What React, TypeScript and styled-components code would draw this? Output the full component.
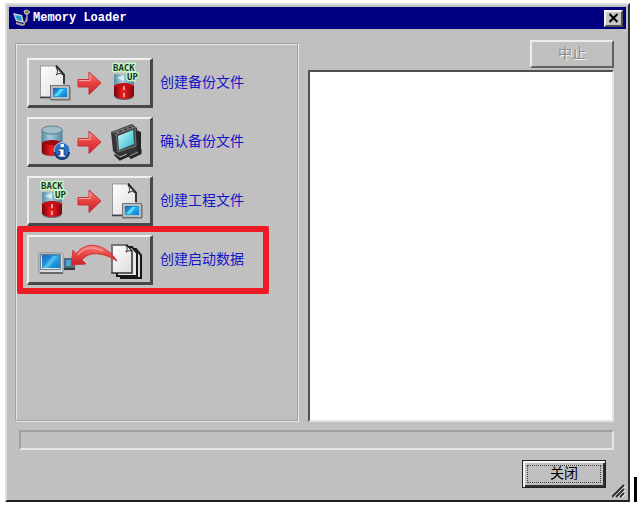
import React from "react";
import styled, { createGlobalStyle } from "styled-components";

const GlobalStyle = createGlobalStyle`
  *, *::before, *::after { box-sizing: border-box; }
  body {
    margin: 0;
    background: #fff;
    font-family: "Liberation Sans", "Noto Sans CJK SC", sans-serif;
    font-size: 14px;
  }
  button { font: inherit; }
`;

const Page = styled.div`
  display: flex;
  gap: 4px;
  min-height: 100vh;
  padding: 3px 0 3px 5px;
`;

const Dialog = styled.main`
  flex: 1;
  min-width: 0;
  display: flex;
  flex-direction: column;
  padding: 2px;
  background: #c0c0c0;
  border: 2px solid;
  border-color: #dedede #303030 #202020 #dedede;
`;

const TitleBar = styled.header`
  display: flex;
  align-items: center;
  gap: 2px;
  height: 22px;
  padding: 0 3px 0 4px;
  background: #000080;
`;

const Title = styled.h1`
  flex: 1;
  margin: 0;
  color: #fff;
  font: bold 12px/16px "Liberation Mono", monospace;
`;

const TitleButton = styled.button`
  display: grid;
  place-items: center;
  width: 19px;
  height: 17px;
  padding: 0;
  background: #c8c8c8;
  border: 2px solid;
  border-color: #f4f4f4 #505050 #505050 #f4f4f4;
`;

const Columns = styled.div`
  flex: 1;
  display: flex;
  gap: 10px;
  padding: 11px 12px 0 6px;
`;

const Actions = styled.section`
  flex: 0 0 283px;
  display: flex;
  flex-direction: column;
  gap: 9px;
  margin: 3px 0 1px;
  padding: 14px 0 0 11px;
  border: 1px solid #a0a0a0;
  box-shadow: 1px 1px #e8e8e8, inset 1px 1px #e8e8e8;
`;

const ActionRow = styled.div`
  position: relative;
  display: flex;
  align-items: center;
  gap: 7px;
`;

const ActionButton = styled.button`
  display: flex;
  align-items: center;
  justify-content: center;
  gap: 8px;
  width: 126px;
  height: 50px;
  padding: 0;
  background: #c0c0c0;
  border: solid;
  border-width: 2px 3px 3px 2px;
  border-color: #f0f0f0 #484848 #484848 #f0f0f0;
  svg { flex: none; overflow: visible; }
`;

const ActionLabel = styled.label`
  color: #1414c8;
  line-height: 20px;
  padding-bottom: 2px;
`;

const Highlight = styled.span`
  position: absolute;
  inset: -9px 28px -9px -10px;
  border: 6px solid #ee1c24;
  border-radius: 2px;
  pointer-events: none;
`;

const Output = styled.section`
  flex: 1;
  min-width: 0;
  display: flex;
  flex-direction: column;
  gap: 2px;
`;

const AbortButton = styled.button`
  align-self: flex-end;
  width: 84px;
  height: 28px;
  padding: 0 0 2px;
  line-height: 20px;
  background: #c0c0c0;
  border: 2px solid;
  border-color: #ececec #606060 #606060 #ececec;
  &:disabled { color: #8c8c8c; text-shadow: 1px 1px #f4f4f4; }
`;

const LogArea = styled.textarea`
  flex: 1;
  width: 100%;
  min-height: 200px;
  resize: none;
  outline: none;
  background: #fff;
  border: 2px solid;
  border-color: #505050 #e4e4e4 #e4e4e4 #505050;
`;

const StatusBar = styled.div`
  height: 20px;
  margin: 8px 12px 0 10px;
  border: 2px solid;
  border-color: #a0a0a0 #e6e6e6 #e6e6e6 #a0a0a0;
`;

const Footer = styled.footer`
  display: flex;
  justify-content: flex-end;
  align-items: flex-end;
  gap: 6px;
  padding-top: 10px;
`;

const CloseButton = styled.button`
  width: 84px;
  height: 28px;
  margin-bottom: 10px;
  padding: 0 0 2px;
  line-height: 18px;
  color: #000;
  background: #c0c0c0;
  border: 1px solid #202020;
  box-shadow: inset 2px 2px #f4f4f4, inset -2px -2px #303030;
  outline: 1px dotted #404040;
  outline-offset: -6px;
`;

const Caret = styled.div`
  align-self: flex-end;
  width: 3px;
  height: 25px;
  background: #000;
`;

function Gradients() {
  return (
    <svg width="0" height="0" display="block" aria-hidden="true">
      <defs>
        <linearGradient id="paper" x1="0" y1="0" x2="1" y2="1">
          <stop offset="0" stopColor="#fff" />
          <stop offset="1" stopColor="#dcdcdc" />
        </linearGradient>
        <linearGradient id="screen" x1="0" y1="0" x2="1" y2="1">
          <stop offset="0" stopColor="#1464b4" />
          <stop offset="0.55" stopColor="#24a4e8" />
          <stop offset="1" stopColor="#0c78c8" />
        </linearGradient>
        <linearGradient id="cyan" x1="0" y1="0" x2="1" y2="1">
          <stop offset="0" stopColor="#d0fafa" />
          <stop offset="1" stopColor="#20b8d0" />
        </linearGradient>
        <linearGradient id="red" x1="0" y1="0" x2="0" y2="1">
          <stop offset="0" stopColor="#f48078" />
          <stop offset="0.5" stopColor="#e84040" />
          <stop offset="1" stopColor="#c82028" />
        </linearGradient>
        <linearGradient id="liquid" x1="0" y1="0" x2="1" y2="0">
          <stop offset="0" stopColor="#780008" />
          <stop offset="0.45" stopColor="#f02020" />
          <stop offset="1" stopColor="#800008" />
        </linearGradient>
        <linearGradient id="glass" x1="0" y1="0" x2="1" y2="0">
          <stop offset="0" stopColor="#5890a4" />
          <stop offset="0.4" stopColor="#a8ccd8" />
          <stop offset="1" stopColor="#5888a0" />
        </linearGradient>
      </defs>
    </svg>
  );
}

function FileIcon() {
  return (
    <svg width="32" height="38" viewBox="0 0 32 38" aria-hidden="true">
      <path d="M2.500 2H19l7 8v23H2.500z" fill="url(#paper)" stroke="#888" strokeWidth=".8" />
      <path d="M2 33.500h12" stroke="#404040" strokeWidth="1.500" />
      <path d="M18 1.500l8 9V20" fill="none" stroke="#202020" strokeWidth="1.700" />
      <path d="M18 3c2 3 2 6 0 8 3-2 5-2 7 0z" fill="#eee" stroke="#303030" />
      <rect x="12.500" y="21.500" width="19" height="14" fill="#b8bcc0" stroke="#70777c" />
      <rect x="15" y="24" width="14" height="9" fill="url(#screen)" />
      <path d="M16 32l6-7h4l-6 7z" fill="#54dcfc" />
      <path d="M13 36h19V23" fill="none" stroke="#686e70" />
    </svg>
  );
}

function ArrowIcon() {
  return (
    <svg width="24" height="24" viewBox="0 0 24 24" aria-hidden="true">
      <path d="M0 8.500h11V1l12 11-12 11.500V16H0z" fill="url(#red)" stroke="#c83038" />
      <path d="M1 9.500h11v-6" fill="none" stroke="#f8a8a0" />
    </svg>
  );
}

function BackupIcon() {
  return (
    <svg width="32" height="38" viewBox="0 0 32 38" aria-hidden="true">
      <path d="M4 10v21c0 6 20 6 20 0V10z" fill="url(#glass)" />
      <path d="M4 22v9c0 6 20 6 20 0v-9c-3-3-17-3-20 0z" fill="url(#liquid)" />
      <path d="M4 22c3-4 17-4 20 0-4 3-16 3-20 0z" fill="#c01018" />
      <path d="M14 22v4M14 29v4" stroke="#ff9090" strokeWidth="2" />
      <path d="M4 31c0 6 20 6 20 0" fill="none" stroke="#586c80" />
      <path d="M7 14l7-3v6z" fill="#d0eef4" />
      <g
        fontFamily="DejaVu Sans Mono, monospace"
        fontWeight="bold"
        fontSize="9"
        fill="#183820"
        stroke="#c8f4c8"
        strokeWidth="3"
        strokeLinejoin="round"
        paintOrder="stroke"
      >
        <text x="3" y="7">BACK</text>
        <text x="17" y="16">UP</text>
      </g>
    </svg>
  );
}

function InfoTankIcon() {
  return (
    <svg width="32" height="38" viewBox="0 0 32 38" aria-hidden="true">
      <path d="M4 7v22c0 5 20 5 20 0V7z" fill="url(#glass)" stroke="#54849a" />
      <path d="M4 20v9c0 5 20 5 20 0v-9c-3-3-17-3-20 0z" fill="url(#liquid)" />
      <path d="M4 20c3-4 17-4 20 0-4 3-16 3-20 0z" fill="#a00810" />
      <ellipse cx="14" cy="7" rx="10" ry="4" fill="#a0bdc8" stroke="#5c8292" />
      <circle cx="24" cy="27.500" r="8" fill="#2870c8" stroke="#b0c8e4" />
      <path d="M17 29a7 7 0 0 0 14 0" fill="none" stroke="#0c3c84" strokeWidth="2" />
      <rect x="22.500" y="21" width="3.500" height="3" fill="#fff" />
      <path d="M20 26h6v6h2v2h-8v-2h2v-4h-2z" fill="#fff" stroke="#182848" strokeWidth=".7" />
    </svg>
  );
}

function ComputerIcon() {
  return (
    <svg width="32" height="38" viewBox="0 0 32 38" aria-hidden="true">
      <path d="M1 9L22 1l5 4 2 21-3 5-6 4-4-4-7 3-6-6z" fill="#343434" />
      <path d="M26 7l5 2v20l-4 1z" fill="#242424" />
      <path d="M2 9L22 2l3 4L6 13z" fill="#707070" />
      <path d="M4 11l3-1M9 9l3-1M14 7l3-1M19 5l2-1" stroke="#303030" strokeWidth="1.500" />
      <path d="M6 11l19-7 1 19-18 6z" fill="#484848" stroke="#888" strokeWidth=".7" />
      <path d="M8 13l15-6 1 14-15 6z" fill="url(#cyan)" />
      <path d="M5 31l5 5 9-4M20 35l10-5v-4" fill="none" stroke="#242424" strokeWidth="3" />
      <path d="M4 30l6 4 7-3M20 33l8-4" fill="none" stroke="#9c9c9c" />
    </svg>
  );
}

function StartupIcon() {
  return (
    <svg width="104" height="38" viewBox="0 0 104 38" aria-hidden="true">
      <rect x="1" y="12" width="24" height="20" rx="1.500" fill="#d8dcdf" stroke="#858b90" />
      <rect x="2.500" y="13.500" width="20" height="15" fill="#e0e4e8" stroke="#718090" />
      <rect x="4" y="14" width="18" height="13" fill="url(#screen)" />
      <path d="M5 27l10-12h5L10 27z" fill="#50bce8" />
      <path d="M2 32h23" stroke="#686868" strokeWidth="2" />
      <rect x="26" y="17" width="11" height="11" fill="#506878" />
      <rect x="28" y="19" width="6" height="6" fill="#48a8e0" />
      <path d="M26 28h11" stroke="#303840" strokeWidth="2" />
      <path d="M83 8h15l5 6v23H83z" fill="#d8d8d8" stroke="#181818" strokeWidth="2" />
      <path d="M79 6h15l5 6v23H79z" fill="#e8e8e8" stroke="#181818" strokeWidth="2" />
      <path d="M74 4h15l5 6v22H74z" fill="url(#paper)" stroke="#303030" strokeWidth="1.500" />
      <path d="M74 31V4h14" fill="none" stroke="#909090" />
      <path d="M88 4c2 3 1 5 0 7 3-2 4-1 6-1z" fill="#eee" stroke="#202020" />
      <path
        d="M79 20C72 9 60 2 49 5c-6 2-9 5-11 8l-3-4-2 15 15-1-4-4C51 10 65 11 79 20z"
        fill="url(#red)"
        stroke="#cc3838"
      />
      <path d="M40 14c7-10 17-7 25-4" fill="none" stroke="#f49a94" strokeWidth="1.500" />
    </svg>
  );
}

const actions = [
  { id: "create-backup", label: "创建备份文件", icon: <><FileIcon /><ArrowIcon /><BackupIcon /></> },
  { id: "verify-backup", label: "确认备份文件", icon: <><InfoTankIcon /><ArrowIcon /><ComputerIcon /></> },
  { id: "create-project", label: "创建工程文件", icon: <><BackupIcon /><ArrowIcon /><FileIcon /></> },
  { id: "create-startup", label: "创建启动数据", icon: <StartupIcon />, highlighted: true },
];

export default function App() {
  return (
    <>
      <GlobalStyle />
      <Gradients />
      <Page>
        <Dialog>
          <TitleBar>
            <svg width="18" height="18" viewBox="0 0 18 18" aria-hidden="true">
              <path d="M0 4l9 2 2 8-8-2z" fill="#d0d8dc" />
              <path d="M2 6l6 1 1 5-5-1z" fill="#2498c8" />
              <path d="M3 13l7 2 2-2v3l-3 1-6-2z" fill="#b0a890" />
              <path d="M11 2l3-1 3 2-2 2h-3zM14 5v7l-3 2" fill="#807860" stroke="#d4ccb4" />
            </svg>
            <Title>Memory Loader</Title>
            <TitleButton type="button" aria-label="Close window">
              <svg width="11" height="10" viewBox="0 0 11 10" aria-hidden="true">
                <path d="M1.500 1l8 8M9.500 1l-8 8" stroke="#000" strokeWidth="2" />
              </svg>
            </TitleButton>
          </TitleBar>
          <Columns>
            <Actions>
              {actions.map((action) => (
                <ActionRow key={action.id}>
                  <ActionButton id={action.id} type="button">{action.icon}</ActionButton>
                  <ActionLabel htmlFor={action.id}>{action.label}</ActionLabel>
                  {action.highlighted && <Highlight />}
                </ActionRow>
              ))}
            </Actions>
            <Output>
              <AbortButton type="button" disabled>中止</AbortButton>
              <LogArea readOnly aria-label="Log" />
            </Output>
          </Columns>
          <StatusBar role="status" />
          <Footer>
            <CloseButton type="button">关闭</CloseButton>
            <svg width="14" height="14" viewBox="0 0 14 14" aria-hidden="true">
              <path d="M2 13L13 2M6 13l7-7M10 13l3-3" stroke="#f4f4f4" strokeWidth="1.500" />
              <path d="M0 13L12 1M4 13l8-8M8 13l4-4" stroke="#303030" strokeWidth="2" />
            </svg>
          </Footer>
        </Dialog>
        <Caret />
      </Page>
    </>
  );
}
